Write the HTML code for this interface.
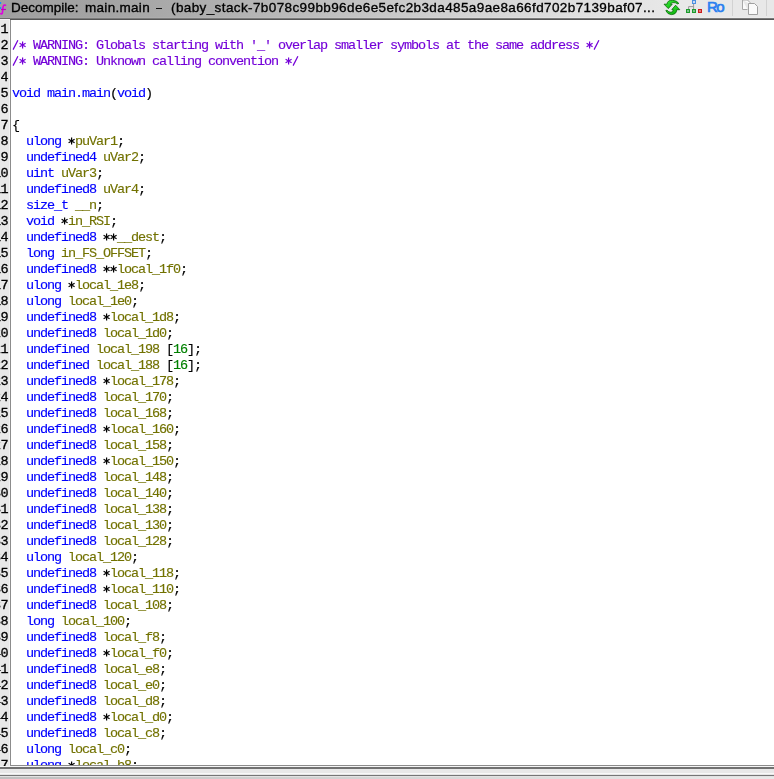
<!DOCTYPE html>
<html><head><meta charset="utf-8">
<style>
html,body{margin:0;padding:0;-webkit-font-smoothing:antialiased;width:774px;height:779px;overflow:hidden;background:#e8e8e8;position:relative;}
div{box-sizing:border-box;}
.a{position:absolute;}
#title{left:0;top:0;width:774px;height:17px;background:linear-gradient(to right,#a0a0a0 0px,#a3a3a3 100px,#adadad 200px,#bbbbbb 300px,#d1d1d1 450px,#e2e2e2 600px,#e8e8e8 680px);}
#t17{left:0;top:17px;width:774px;height:1px;background:linear-gradient(to right,#a3a3a3 0px,#a7a7a7 100px,#b2b2b2 200px,#c0c0c0 300px,#d6d6d6 450px,#e9e9e9 600px,#ececec 680px);}
.tt{top:0px;will-change:transform;-webkit-text-stroke:0.35px #000;font-family:"Liberation Sans",sans-serif;font-size:13.5px;line-height:16px;color:#000;white-space:pre;}
#t18{left:10px;top:18px;width:764px;height:1px;background:#7a7a7a;}#t18g{left:0;top:18px;width:10px;height:1px;background:#6a6a6a;}
#t19{left:10px;top:19px;width:764px;height:1px;background:#555555;}
#gutter{left:0;top:19px;width:10px;height:747px;background:#e8e8e8;overflow:hidden;}
#ghl{left:9px;top:19px;width:1px;height:747px;background:#f2f2f2;}
#gtop{left:0;top:19px;width:10px;height:1px;background:#f4f4f4;}
#gborder{left:10px;top:20px;width:1px;height:746px;background:#8c8c8c;}
#code{left:11px;top:20px;width:763px;height:745px;background:#fff;overflow:hidden;}
#cbottom{left:10px;top:765px;width:764px;height:1px;background:#8c8c8c;}
#gut{position:absolute;will-change:transform;right:2.4px;top:3px;letter-spacing:-0.7px;font-family:"Liberation Mono",monospace;font-size:13.5px;line-height:16px;color:#000;text-align:right;-webkit-text-stroke:0.3px currentColor;}
#src{position:absolute;will-change:transform;left:1px;top:2px;font-family:"Liberation Mono",monospace;font-size:13.5px;letter-spacing:-1.1px;line-height:16px;color:#000;white-space:pre;-webkit-text-stroke:0.15px currentColor;}
.row{height:16px;}
.c{color:#7400d8;}
.k{color:#0000ff;}
.f{color:#0000ff;}
.v{color:#727200;}
.n{color:#008000;}
.ast{display:inline-block;width:7px;height:16px;vertical-align:top;position:relative;}
.ast svg{position:absolute;left:0;top:0;}
#b766{left:0;top:766px;width:774px;height:1px;background:#f6f6f6;}
#b767{left:0;top:767px;width:774px;height:2px;background:#717171;}
#b769{left:0;top:769px;width:774px;height:4px;background:#e8e8e8;}
#b773{left:0;top:773px;width:774px;height:1px;background:#f8f8f8;}#b774{left:0;top:774px;width:774px;height:1px;background:#e6e6e6;}
#b775{left:0;top:775px;width:774px;height:1px;background:#767676;}
#b776{left:0;top:776px;width:774px;height:1px;background:#e2e2e2;}#b777{left:0;top:777px;width:774px;height:2px;background:linear-gradient(to right,#c0c0c0 0px,#d0d0d0 300px,#dcdcdc 520px,#e8e8e8 740px);}
</style></head><body>
<div id="title" class="a"></div>
<div id="t17" class="a"></div>
<svg class="a" style="left:0;top:0" width="8" height="17" viewBox="0 0 8 17">
 <rect x="0" y="2" width="1.2" height="2" fill="#1a8cff"/>
 <rect x="0" y="7" width="1.2" height="2" fill="#1a8cff"/>
 <path d="M6 5.6 Q5 4.6 3.8 5.2 Q3 6 2.8 9 L2.4 13 Q2 14.6 0 13.4" fill="none" stroke="#e000e0" stroke-width="1.6"/>
 <path d="M1 9.5 H6" stroke="#c000c0" stroke-width="1.2"/>
</svg>
<div class="a tt" style="left:11px">Decompile:</div>
<div class="a tt" style="left:85px;letter-spacing:0.3px">main.main</div>
<div class="a" style="left:156px;top:8px;width:6px;height:1.3px;background:#111"></div>
<div class="a tt" style="left:171.3px;letter-spacing:0.39px">(baby_stack-7b078c99bb96de6e5efc2b3da485a9ae8a66fd702b7139baf07...</div>
<!-- refresh icon -->
<svg class="a" style="left:662px;top:0" width="20" height="17" viewBox="0 0 20 17">
 <defs><linearGradient id="gg" x1="0" y1="0" x2="1" y2="1"><stop offset="0" stop-color="#40f040"/><stop offset="0.6" stop-color="#18c818"/><stop offset="1" stop-color="#088a08"/></linearGradient></defs>
 <path d="M2,4.2 L5,4.2 Q5.4,0 10.5,0.3 Q15,0.6 16.8,3.4 L15.6,3.9 Q13.5,2.3 11,2.6 Q8.8,2.9 8.6,4.3 L10.2,4.3 L6.3,8.6 Z" fill="url(#gg)" stroke="#056805" stroke-width="0.8" stroke-linejoin="round"/>
 <path d="M17.8,9.7 L14.8,9.7 Q14.4,14.6 9.3,14.6 Q5.5,14.4 3.8,10.6 L5,10.2 Q6.8,12.4 9,12.3 Q11.2,12.1 11.3,9.6 L9.8,9.6 L13.6,5.2 Z" fill="url(#gg)" stroke="#056805" stroke-width="0.8" stroke-linejoin="round"/>
</svg>
<!-- tree icon -->
<svg class="a" style="left:684px;top:0" width="20" height="16" viewBox="0 0 20 16">
 <path d="M9.6 4 V9 M4.6 9 V6.6 H9.6" fill="none" stroke="#9a9a9a" stroke-width="1"/>
 <rect x="8" y="0" width="4" height="4" fill="#4a90e0"/>
 <rect x="9" y="1" width="2" height="2" fill="#c8d8f4"/>
 <rect x="2" y="9" width="4" height="4" fill="#1a9a2a"/>
 <rect x="3" y="10" width="2" height="2" fill="#7cc08a"/>
 <rect x="8" y="9" width="4" height="4" fill="#1a9a2a"/>
 <rect x="9" y="10" width="2" height="2" fill="#7cc08a"/>
 <rect x="14" y="9" width="4" height="4" fill="#cc1a1a"/>
 <rect x="15" y="10" width="2" height="2" fill="#e07878"/>
</svg>
<div class="a" style="left:707px;top:-1px;font-family:'Liberation Sans',sans-serif;font-size:15px;line-height:16px;letter-spacing:-1.5px;color:#2a7ff0;-webkit-text-stroke:0.7px #2a7ff0;">Ro</div>
<div class="a" style="left:732px;top:0;width:1px;height:16px;background:#d2d2d2"></div>
<svg class="a" style="left:740px;top:0" width="20" height="17" viewBox="0 0 20 17">
 <path d="M2.5 0 V9.5 H7.5 M2.5 0 H7.5 L10 2.5 V4" fill="#fafafa" stroke="#a8a8a8" stroke-width="1"/>
 <path d="M8.5 3.5 H14.5 L17.5 6.5 V14.5 H8.5 Z" fill="#fafafa" stroke="#a0a0a0" stroke-width="1"/>
</svg>
<div class="a" style="left:766px;top:0;width:1px;height:16px;background:#d2d2d2"></div>
<div id="t18" class="a"></div><div id="t18g" class="a"></div>
<div id="t19" class="a"></div>
<div id="gutter" class="a"><div id="gut">
<div>1</div>
<div>2</div>
<div>3</div>
<div>4</div>
<div>5</div>
<div>6</div>
<div>7</div>
<div>8</div>
<div>9</div>
<div>10</div>
<div>11</div>
<div>12</div>
<div>13</div>
<div>14</div>
<div>15</div>
<div>16</div>
<div>17</div>
<div>18</div>
<div>19</div>
<div>20</div>
<div>21</div>
<div>22</div>
<div>23</div>
<div>24</div>
<div>25</div>
<div>26</div>
<div>27</div>
<div>28</div>
<div>29</div>
<div>30</div>
<div>31</div>
<div>32</div>
<div>33</div>
<div>34</div>
<div>35</div>
<div>36</div>
<div>37</div>
<div>38</div>
<div>39</div>
<div>40</div>
<div>41</div>
<div>42</div>
<div>43</div>
<div>44</div>
<div>45</div>
<div>46</div>
<div>47</div>
</div></div>
<div id="gtop" class="a"></div>
<div id="ghl" class="a"></div>
<div id="gborder" class="a"></div>
<div id="code" class="a"><div id="src"><div class="row"></div><div class="row"><span class="c"><span class="ast"><svg width="7" height="16" viewBox="0 0 7 16"><path d="M1.1 11.6 L5.9 2.3" stroke="currentColor" stroke-width="1.25"/></svg></span><span class="ast"><svg width="7" height="16" viewBox="0 0 7 16"><path d="M3.6 3.6 V10.6 M0.6 5.35 L6.6 8.85 M0.6 8.85 L6.6 5.35" stroke="currentColor" stroke-width="1.2"/></svg></span> WARNING: Globals starting with '_' overlap smaller symbols at the same address <span class="ast"><svg width="7" height="16" viewBox="0 0 7 16"><path d="M3.6 3.6 V10.6 M0.6 5.35 L6.6 8.85 M0.6 8.85 L6.6 5.35" stroke="currentColor" stroke-width="1.2"/></svg></span><span class="ast"><svg width="7" height="16" viewBox="0 0 7 16"><path d="M1.1 11.6 L5.9 2.3" stroke="currentColor" stroke-width="1.25"/></svg></span></span></div><div class="row"><span class="c"><span class="ast"><svg width="7" height="16" viewBox="0 0 7 16"><path d="M1.1 11.6 L5.9 2.3" stroke="currentColor" stroke-width="1.25"/></svg></span><span class="ast"><svg width="7" height="16" viewBox="0 0 7 16"><path d="M3.6 3.6 V10.6 M0.6 5.35 L6.6 8.85 M0.6 8.85 L6.6 5.35" stroke="currentColor" stroke-width="1.2"/></svg></span> WARNING: Unknown calling convention <span class="ast"><svg width="7" height="16" viewBox="0 0 7 16"><path d="M3.6 3.6 V10.6 M0.6 5.35 L6.6 8.85 M0.6 8.85 L6.6 5.35" stroke="currentColor" stroke-width="1.2"/></svg></span><span class="ast"><svg width="7" height="16" viewBox="0 0 7 16"><path d="M1.1 11.6 L5.9 2.3" stroke="currentColor" stroke-width="1.25"/></svg></span></span></div><div class="row"></div><div class="row"><span class="k">void</span> <span class="f">main.main</span>(<span class="k">void</span>)</div><div class="row"></div><div class="row">{</div><div class="row">  <span class="k">ulong</span> <span class="ast"><svg width="7" height="16" viewBox="0 0 7 16"><path d="M3.6 3.6 V10.6 M0.6 5.35 L6.6 8.85 M0.6 8.85 L6.6 5.35" stroke="currentColor" stroke-width="1.2"/></svg></span><span class="v">puVar1</span>;</div><div class="row">  <span class="k">undefined4</span> <span class="v">uVar2</span>;</div><div class="row">  <span class="k">uint</span> <span class="v">uVar3</span>;</div><div class="row">  <span class="k">undefined8</span> <span class="v">uVar4</span>;</div><div class="row">  <span class="k">size_t</span> <span class="v">__n</span>;</div><div class="row">  <span class="k">void</span> <span class="ast"><svg width="7" height="16" viewBox="0 0 7 16"><path d="M3.6 3.6 V10.6 M0.6 5.35 L6.6 8.85 M0.6 8.85 L6.6 5.35" stroke="currentColor" stroke-width="1.2"/></svg></span><span class="v">in_RSI</span>;</div><div class="row">  <span class="k">undefined8</span> <span class="ast"><svg width="7" height="16" viewBox="0 0 7 16"><path d="M3.6 3.6 V10.6 M0.6 5.35 L6.6 8.85 M0.6 8.85 L6.6 5.35" stroke="currentColor" stroke-width="1.2"/></svg></span><span class="ast"><svg width="7" height="16" viewBox="0 0 7 16"><path d="M3.6 3.6 V10.6 M0.6 5.35 L6.6 8.85 M0.6 8.85 L6.6 5.35" stroke="currentColor" stroke-width="1.2"/></svg></span><span class="v">__dest</span>;</div><div class="row">  <span class="k">long</span> <span class="v">in_FS_OFFSET</span>;</div><div class="row">  <span class="k">undefined8</span> <span class="ast"><svg width="7" height="16" viewBox="0 0 7 16"><path d="M3.6 3.6 V10.6 M0.6 5.35 L6.6 8.85 M0.6 8.85 L6.6 5.35" stroke="currentColor" stroke-width="1.2"/></svg></span><span class="ast"><svg width="7" height="16" viewBox="0 0 7 16"><path d="M3.6 3.6 V10.6 M0.6 5.35 L6.6 8.85 M0.6 8.85 L6.6 5.35" stroke="currentColor" stroke-width="1.2"/></svg></span><span class="v">local_1f0</span>;</div><div class="row">  <span class="k">ulong</span> <span class="ast"><svg width="7" height="16" viewBox="0 0 7 16"><path d="M3.6 3.6 V10.6 M0.6 5.35 L6.6 8.85 M0.6 8.85 L6.6 5.35" stroke="currentColor" stroke-width="1.2"/></svg></span><span class="v">local_1e8</span>;</div><div class="row">  <span class="k">ulong</span> <span class="v">local_1e0</span>;</div><div class="row">  <span class="k">undefined8</span> <span class="ast"><svg width="7" height="16" viewBox="0 0 7 16"><path d="M3.6 3.6 V10.6 M0.6 5.35 L6.6 8.85 M0.6 8.85 L6.6 5.35" stroke="currentColor" stroke-width="1.2"/></svg></span><span class="v">local_1d8</span>;</div><div class="row">  <span class="k">undefined8</span> <span class="v">local_1d0</span>;</div><div class="row">  <span class="k">undefined</span> <span class="v">local_198</span> [<span class="n">16</span>];</div><div class="row">  <span class="k">undefined</span> <span class="v">local_188</span> [<span class="n">16</span>];</div><div class="row">  <span class="k">undefined8</span> <span class="ast"><svg width="7" height="16" viewBox="0 0 7 16"><path d="M3.6 3.6 V10.6 M0.6 5.35 L6.6 8.85 M0.6 8.85 L6.6 5.35" stroke="currentColor" stroke-width="1.2"/></svg></span><span class="v">local_178</span>;</div><div class="row">  <span class="k">undefined8</span> <span class="v">local_170</span>;</div><div class="row">  <span class="k">undefined8</span> <span class="v">local_168</span>;</div><div class="row">  <span class="k">undefined8</span> <span class="ast"><svg width="7" height="16" viewBox="0 0 7 16"><path d="M3.6 3.6 V10.6 M0.6 5.35 L6.6 8.85 M0.6 8.85 L6.6 5.35" stroke="currentColor" stroke-width="1.2"/></svg></span><span class="v">local_160</span>;</div><div class="row">  <span class="k">undefined8</span> <span class="v">local_158</span>;</div><div class="row">  <span class="k">undefined8</span> <span class="ast"><svg width="7" height="16" viewBox="0 0 7 16"><path d="M3.6 3.6 V10.6 M0.6 5.35 L6.6 8.85 M0.6 8.85 L6.6 5.35" stroke="currentColor" stroke-width="1.2"/></svg></span><span class="v">local_150</span>;</div><div class="row">  <span class="k">undefined8</span> <span class="v">local_148</span>;</div><div class="row">  <span class="k">undefined8</span> <span class="v">local_140</span>;</div><div class="row">  <span class="k">undefined8</span> <span class="v">local_138</span>;</div><div class="row">  <span class="k">undefined8</span> <span class="v">local_130</span>;</div><div class="row">  <span class="k">undefined8</span> <span class="v">local_128</span>;</div><div class="row">  <span class="k">ulong</span> <span class="v">local_120</span>;</div><div class="row">  <span class="k">undefined8</span> <span class="ast"><svg width="7" height="16" viewBox="0 0 7 16"><path d="M3.6 3.6 V10.6 M0.6 5.35 L6.6 8.85 M0.6 8.85 L6.6 5.35" stroke="currentColor" stroke-width="1.2"/></svg></span><span class="v">local_118</span>;</div><div class="row">  <span class="k">undefined8</span> <span class="ast"><svg width="7" height="16" viewBox="0 0 7 16"><path d="M3.6 3.6 V10.6 M0.6 5.35 L6.6 8.85 M0.6 8.85 L6.6 5.35" stroke="currentColor" stroke-width="1.2"/></svg></span><span class="v">local_110</span>;</div><div class="row">  <span class="k">undefined8</span> <span class="v">local_108</span>;</div><div class="row">  <span class="k">long</span> <span class="v">local_100</span>;</div><div class="row">  <span class="k">undefined8</span> <span class="v">local_f8</span>;</div><div class="row">  <span class="k">undefined8</span> <span class="ast"><svg width="7" height="16" viewBox="0 0 7 16"><path d="M3.6 3.6 V10.6 M0.6 5.35 L6.6 8.85 M0.6 8.85 L6.6 5.35" stroke="currentColor" stroke-width="1.2"/></svg></span><span class="v">local_f0</span>;</div><div class="row">  <span class="k">undefined8</span> <span class="v">local_e8</span>;</div><div class="row">  <span class="k">undefined8</span> <span class="v">local_e0</span>;</div><div class="row">  <span class="k">undefined8</span> <span class="v">local_d8</span>;</div><div class="row">  <span class="k">undefined8</span> <span class="ast"><svg width="7" height="16" viewBox="0 0 7 16"><path d="M3.6 3.6 V10.6 M0.6 5.35 L6.6 8.85 M0.6 8.85 L6.6 5.35" stroke="currentColor" stroke-width="1.2"/></svg></span><span class="v">local_d0</span>;</div><div class="row">  <span class="k">undefined8</span> <span class="v">local_c8</span>;</div><div class="row">  <span class="k">ulong</span> <span class="v">local_c0</span>;</div><div class="row">  <span class="k">ulong</span> <span class="ast"><svg width="7" height="16" viewBox="0 0 7 16"><path d="M3.6 3.6 V10.6 M0.6 5.35 L6.6 8.85 M0.6 8.85 L6.6 5.35" stroke="currentColor" stroke-width="1.2"/></svg></span><span class="v">local_b8</span>;</div></div></div>
<div id="cbottom" class="a"></div>
<div id="b766" class="a"></div><div id="b767" class="a"></div><div id="b769" class="a"></div><div id="b773" class="a"></div><div id="b774" class="a"></div><div id="b775" class="a"></div><div id="b776" class="a"></div><div id="b777" class="a"></div>
</body></html>
